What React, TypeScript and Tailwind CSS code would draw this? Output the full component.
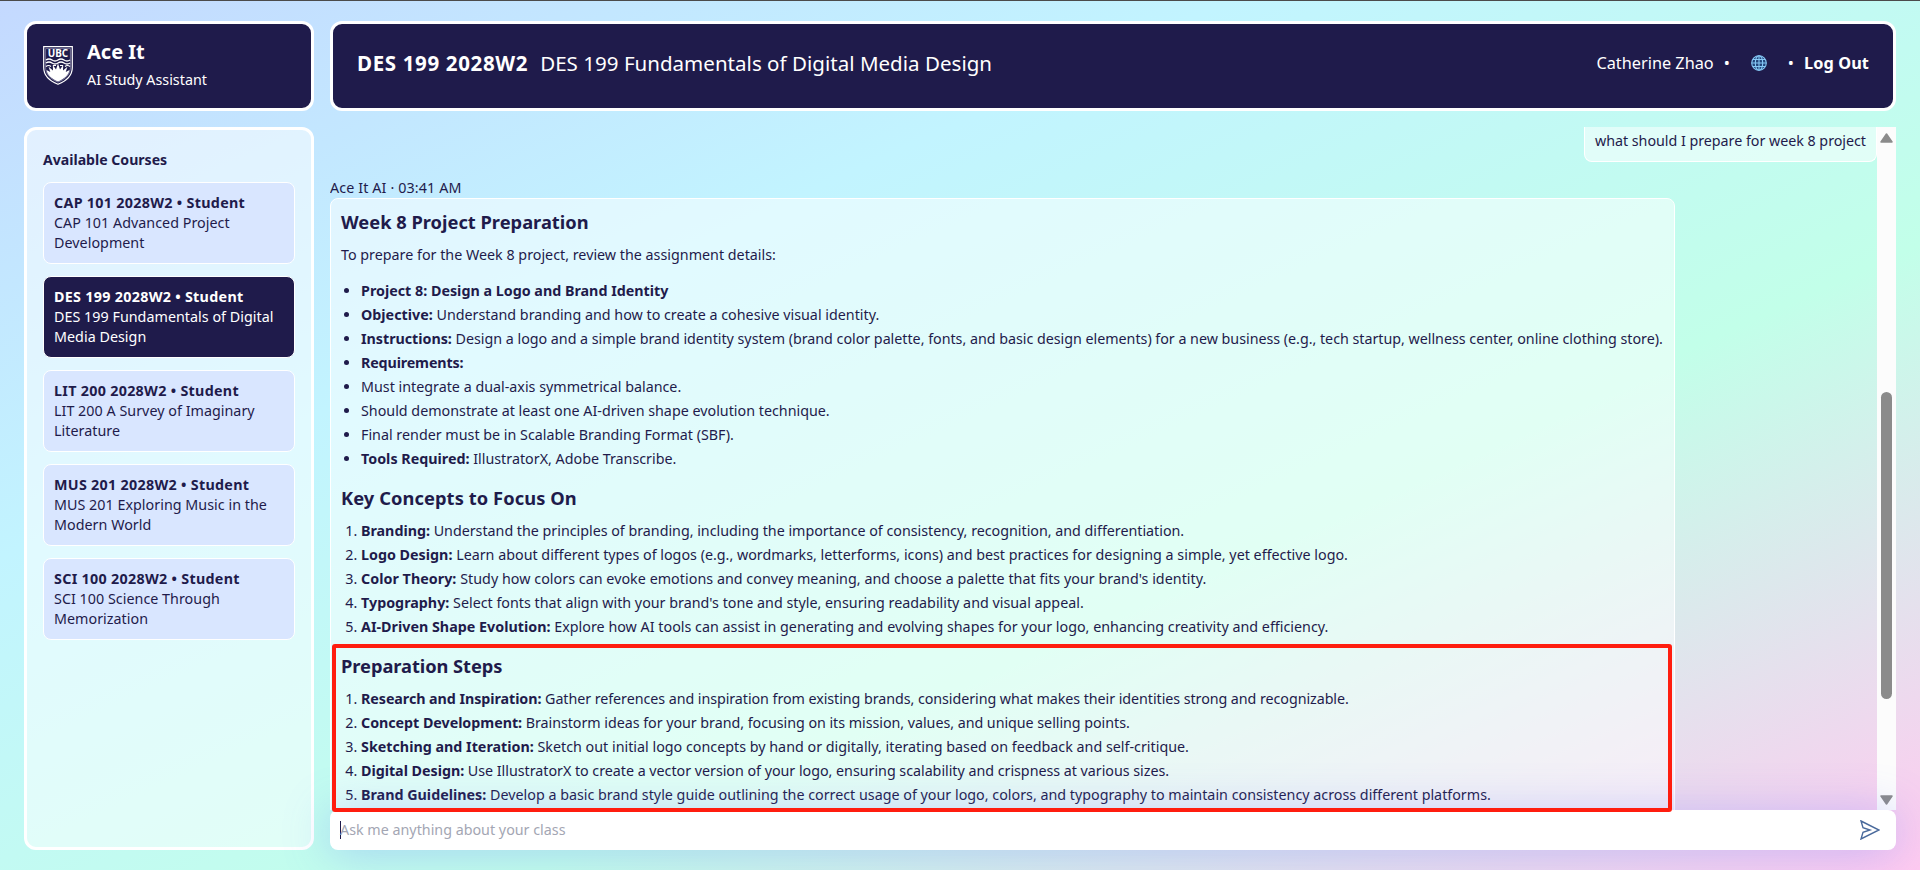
import React from "react";

type Item = { term?: string; text?: string; fit?: string };

const courses = [
  { code: "CAP 101 2028W2 • Student", name: "CAP 101 Advanced Project Development" },
  { code: "DES 199 2028W2 • Student", name: "DES 199 Fundamentals of Digital Media Design", active: true },
  { code: "LIT 200 2028W2 • Student", name: "LIT 200 A Survey of Imaginary Literature" },
  { code: "MUS 201 2028W2 • Student", name: "MUS 201 Exploring Music in the Modern World" },
  { code: "SCI 100 2028W2 • Student", name: "SCI 100 Science Through Memorization" },
];

const assignment: Item[] = [
  { term: "Project 8: Design a Logo and Brand Identity" },
  { term: "Objective:", text: "Understand branding and how to create a cohesive visual identity." },
  {
    term: "Instructions:",
    text: "Design a logo and a simple brand identity system (brand color palette, fonts, and basic design elements) for a new business (e.g., tech startup, wellness center, online clothing store).",
    fit: "tracking-[-0.026px]",
  },
  { term: "Requirements:", fit: "tracking-[-0.15px]" },
  { text: "Must integrate a dual-axis symmetrical balance." },
  { text: "Should demonstrate at least one AI-driven shape evolution technique." },
  { text: "Final render must be in Scalable Branding Format (SBF)." },
  { term: "Tools Required:", text: "IllustratorX, Adobe Transcribe." },
];

const concepts: Item[] = [
  { term: "Branding:", text: "Understand the principles of branding, including the importance of consistency, recognition, and differentiation.", fit: "tracking-[-0.02px]" },
  { term: "Logo Design:", text: "Learn about different types of logos (e.g., wordmarks, letterforms, icons) and best practices for designing a simple, yet effective logo." },
  { term: "Color Theory:", text: "Study how colors can evoke emotions and convey meaning, and choose a palette that fits your brand's identity.", fit: "tracking-[0.03px]" },
  { term: "Typography:", text: "Select fonts that align with your brand's tone and style, ensuring readability and visual appeal." },
  { term: "AI-Driven Shape Evolution:", text: "Explore how AI tools can assist in generating and evolving shapes for your logo, enhancing creativity and efficiency.", fit: "tracking-[0.01px]" },
];

const steps: Item[] = [
  { term: "Research and Inspiration:", text: "Gather references and inspiration from existing brands, considering what makes their identities strong and recognizable.", fit: "tracking-[-0.065px]" },
  { term: "Concept Development:", text: "Brainstorm ideas for your brand, focusing on its mission, values, and unique selling points.", fit: "tracking-[-0.045px]" },
  { term: "Sketching and Iteration:", text: "Sketch out initial logo concepts by hand or digitally, iterating based on feedback and self-critique." },
  { term: "Digital Design:", text: "Use IllustratorX to create a vector version of your logo, ensuring scalability and crispness at various sizes.", fit: "tracking-[-0.03px]" },
  { term: "Brand Guidelines:", text: "Develop a basic brand style guide outlining the correct usage of your logo, colors, and typography to maintain consistency across different platforms." },
];

function Shield() {
  return (
    <svg width="30" height="39" viewBox="0 0 30 39" className="shrink-0" aria-hidden="true">
      <path d="M.7.7h28.6v20.8c0 8-5.6 13.3-14.3 16.8C6.3 34.8.7 29.5.7 21.5z" fill="#1f1b4b" stroke="#fff" strokeWidth="1.2" />
      <path d="M2.600 2.600h24.800v18.700c0 7-4.700 11.700-12.400 14.900C7.300 33 2.600 28.300 2.600 21.300z" fill="none" stroke="#a9a7c4" strokeWidth=".6" />
      <text x="15" y="11.400" textAnchor="middle" fontFamily="Noto Sans, sans-serif" fontWeight="700" fontSize="11" textLength="20.500" lengthAdjust="spacingAndGlyphs" fill="#fff">UBC</text>
      <path d="M3 14q3-2 6 0t6 0 6 0 6 0M3 17q3-2 6 0t6 0 6 0 6 0" fill="none" stroke="#fff" strokeWidth="1.500" />
      <path d="M3 20.500q2.500-2 5 0M22 20.500q2.500-2 5 0M10 19.500h3M17 19.500h3" fill="none" stroke="#fff" strokeWidth="1.200" />
      <path d="M3.500 24 7.300 26 5.600 20.800 10 24.600 9.800 19 13 23.500 15 17.500 17 23.500 20.200 19 20 24.600 24.400 20.800 22.700 26 26.500 24C25.500 29.500 21.500 32.800 15 35.500 8.500 32.800 4.500 29.500 3.500 24z" fill="#fff" />
    </svg>
  );
}

function Globe() {
  return (
    <svg width="16" height="16" viewBox="0 0 16 16" aria-hidden="true" fill="#22457c" stroke="#86c8f5" strokeWidth="1.100">
      <circle cx="8" cy="8" r="7.300" />
      <ellipse cx="8" cy="8" rx="3.700" ry="7.300" fill="none" />
      <path d="M8 .7v14.600M.7 8h14.600M2 4.500h12M2 11.500h12" fill="none" />
    </svg>
  );
}

function Entries({ items }: { items: Item[] }) {
  return (
    <>
      {items.map((it, i) => (
        <li key={i} className="whitespace-nowrap">
          <span className={it.fit}>
            {it.term && <strong className="font-bold">{it.term}</strong>}
            {it.term && it.text && " "}
            {it.text}
          </span>
        </li>
      ))}
    </>
  );
}

export default function App() {
  return (
    <div className="flex h-[870px] w-[1920px] flex-col gap-4 overflow-hidden border-t border-[#4b4b4b] bg-[linear-gradient(to_bottom_right,#c4d9ff_0%,#c2f4ff_32%,#c2ffe9_64%,#ffcaf0_100%)] pt-5 pr-6 pb-5 pl-6 font-['Noto_Sans',sans-serif] text-[14.3px] text-[#1f1b4b]">
      <header className="flex h-[90px] shrink-0 gap-4 text-white">
        <div className="flex w-[290px] shrink-0 gap-3.5 rounded-xl border-3 border-white bg-[#1f1b4b] pt-[22px] pl-4">
          <Shield />
          <div className="-mt-2">
            <h1 className="text-[20px] leading-7 font-bold">Ace It</h1>
            <p className="text-[14.3px] leading-7">AI Study Assistant</p>
          </div>
        </div>
        <div className="flex flex-1 items-center justify-between rounded-xl border-3 border-white bg-[#1f1b4b] pr-6 pb-1.5 pl-6">
          <div className="flex items-baseline gap-3 text-[20.5px]">
            <span className="text-[20.5px] font-bold tracking-[0.65px]">DES 199 2028W2</span>
            <span className="tracking-[0.03px]">DES 199 Fundamentals of Digital Media Design</span>
          </div>
          <div className="flex items-center text-[16.3px]">
            <span>Catherine Zhao</span>
            <span className="ml-2.5">•</span>
            <span className="ml-[21px]"><Globe /></span>
            <span className="ml-[21px]">•</span>
            <span className="ml-2.5 font-bold tracking-[0.1px]">Log Out</span>
          </div>
        </div>
      </header>

      <div className="flex min-h-0 flex-1 gap-4">
        <aside className="flex w-[290px] shrink-0 flex-col rounded-xl border-3 border-white bg-white/50 px-4 pt-5">
          <h2 className="mb-3 text-[14.1px] leading-5 font-bold">Available Courses</h2>
          <ul className="flex flex-col gap-3">
            {courses.map((c) => (
              <li
                key={c.code}
                className={
                  c.active
                    ? "h-[82px] rounded-lg border border-white bg-[#1f1b4b] px-2.5 pt-2.5 leading-5 text-white"
                    : "h-[82px] rounded-lg border border-white bg-[#d9e6ff] px-2.5 pt-2.5 leading-5"
                }
              >
                <div className="font-bold tracking-[0.3px]">{c.code}</div>
                <div className="tracking-[0.03px]">{c.name}</div>
              </li>
            ))}
          </ul>
        </aside>

        <main className="relative flex min-w-0 flex-1 flex-col">
          <div className="flex min-h-0 flex-1 overflow-hidden">
            <div className="flex min-w-0 flex-1 flex-col items-start overflow-hidden">
              <div className="flex h-[35px] shrink-0 self-end rounded-b-lg border border-t-0 border-white bg-white/50 px-2.5 leading-7 tracking-[-0.03px]">
                what should I prepare for week 8 project
              </div>
              <div className="mt-4 h-5 shrink-0 leading-5 tracking-[0.12px]">Ace It AI · 03:41 AM</div>
              <article className="h-[640px] w-[1345px] shrink-0 rounded-lg border border-white bg-white/50 px-2.5 pt-[9px] leading-6">
                <h3 className="text-[18.3px] leading-7 font-bold">Week 8 Project Preparation</h3>
                <p className="mt-[7px]">To prepare for the Week 8 project, review the assignment details:</p>
                <ul className="mt-3 list-disc pl-5">
                  <Entries items={assignment} />
                </ul>
                <h3 className="mt-[13px] text-[18.3px] leading-7 font-bold tracking-[0.08px]">Key Concepts to Focus On</h3>
                <ol className="mt-[7px] list-decimal pl-5">
                  <Entries items={concepts} />
                </ol>
                <h3 className="mt-[13px] text-[18.3px] leading-7 font-bold tracking-[-0.06px]">Preparation Steps</h3>
                <ol className="mt-[7px] list-decimal pl-5">
                  <Entries items={steps} />
                </ol>
              </article>
            </div>
            <div className="flex w-[19px] shrink-0 flex-col items-center bg-[#fcfcfc]">
              <svg className="mt-1.5 shrink-0" width="13" height="10" viewBox="0 0 13 10"><path d="M6.500 1 12 9H1z" fill="#8b8b8b" stroke="#8b8b8b" strokeWidth="1.500" strokeLinejoin="round" /></svg>
              <div className="mt-[249px] h-[307px] w-[11px] shrink-0 rounded-full bg-[#8b8b8b]" />
              <svg className="mt-24 shrink-0" width="13" height="10" viewBox="0 0 13 10"><path d="M6.500 9 12 1H1z" fill="#8b8b8b" stroke="#8b8b8b" strokeWidth="1.500" strokeLinejoin="round" /></svg>
            </div>
          </div>
          <div className="relative flex h-10 shrink-0 items-center justify-between rounded-lg bg-white pr-4 pl-2.5 shadow-[0_3px_46px_rgba(100,120,255,0.34)]">
            <div className="flex items-center">
              <span className="h-[18px] w-px bg-[#1f1b4b]" />
              <span className="-ml-px text-[#a3a6b3]">Ask me anything about your class</span>
            </div>
            <svg width="20" height="20" viewBox="0 0 20 20" fill="none" stroke="#4a6a9c" strokeWidth="1.400" aria-hidden="true">
              <path d="M1 1 19 10 1 19 3 12.300 10 10 3 7.700z" />
            </svg>
          </div>
          <div className="pointer-events-none absolute top-[517px] left-[2px] h-[168px] w-[1340px] rounded-[3px] border-4 border-[#ff1d0f]" />
        </main>
      </div>
    </div>
  );
}
